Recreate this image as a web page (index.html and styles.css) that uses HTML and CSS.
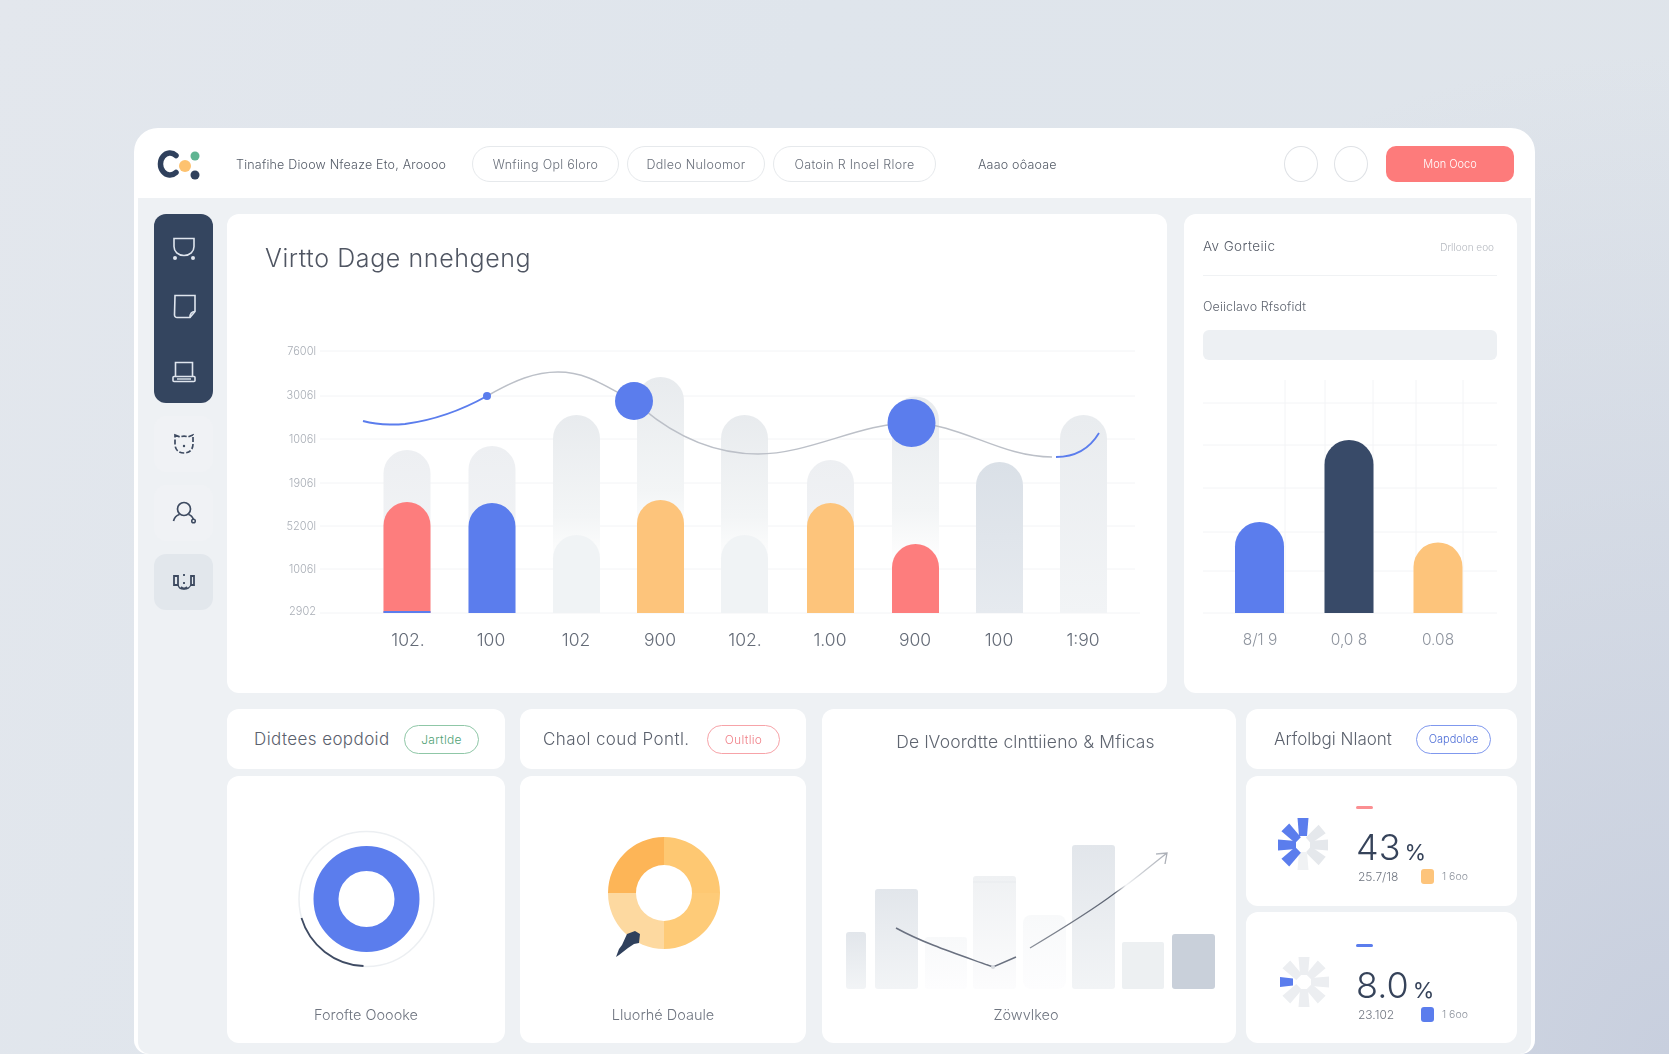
FILE: index.html
```html
<!DOCTYPE html>
<html lang="en">
<head>
<meta charset="utf-8">
<title>Dashboard</title>
<link rel="stylesheet" href="styles.css">
</head>
<body>
<div class="window">
  <header class="topbar">
    <svg class="logo" viewBox="156 148 44 34" width="44" height="34">
      <path d="M176 156.500a9.500 11 0 1 0 0 17" fill="none" stroke="#2f405c" stroke-width="5.500" stroke-linecap="round"/>
      <circle cx="185" cy="167" r="6" fill="#fdc26f"/>
      <circle cx="195" cy="157" r="4.500" fill="#5fb592"/>
      <circle cx="195" cy="176" r="4.500" fill="#2f405c"/>
    </svg>
    <span class="crumb">Tinafihe Dioow Nfeaze Eto, Aroooo</span>
    <nav class="pills">
      <span class="pill pill-a">Wnfiing Opl 6loro</span>
      <span class="pill pill-b">Ddleo Nuloomor</span>
      <span class="pill pill-c">Oatoin R Inoel Rlore</span>
    </nav>
    <span class="crumb2">Aaao oôaoae</span>
    <span class="spacer"></span>
    <span class="round"></span>
    <span class="round"></span>
    <span class="cta">Mon Ooco</span>
  </header>

  <div class="body">
    <aside class="side">
      <div class="side-dark">
        <svg class="ico" viewBox="0 0 26 26" width="26" height="26"><path d="M3 2.500h20v8c0 5-4 9-10 9s-10-4-10-9z" fill="none" stroke="#dfe5ee" stroke-width="1.600"/><circle cx="4" cy="22" r="2" fill="#dfe5ee"/><circle cx="22" cy="22" r="2" fill="#dfe5ee"/></svg>
        <svg class="ico" viewBox="0 0 26 26" width="26" height="26"><path d="M4 1.500h20v16l-5 6H6a2.500 2.500 0 0 1-2.500-2.500z" fill="none" stroke="#dfe5ee" stroke-width="1.600"/><path d="M24 17.500c-3 0-5 1-5 6" fill="none" stroke="#dfe5ee" stroke-width="1.600"/></svg>
        <svg class="ico ico-low" viewBox="0 0 26 26" width="26" height="26"><path d="M4.500 17V3.500h17V17" fill="none" stroke="#dfe5ee" stroke-width="1.600"/><rect x="2" y="17.500" width="22" height="5" rx="1" fill="none" stroke="#dfe5ee" stroke-width="1.600"/><path d="M6 20h14" stroke="#dfe5ee" stroke-width="1.400"/></svg>
      </div>
      <div class="side-btn">
        <svg class="ico" viewBox="0 0 26 26" width="26" height="26"><path d="M4 4l5 2c2-1 6-1 8 0l5-2v9c0 6-4 9-9 9s-9-3-9-9z" fill="none" stroke="#3d4a60" stroke-width="1.700" stroke-dasharray="5 2"/><circle cx="13" cy="15" r="1.200" fill="#3d4a60"/></svg>
      </div>
      <div class="side-btn">
        <svg class="ico" viewBox="0 0 26 26" width="26" height="26"><circle cx="13" cy="9" r="6.500" fill="none" stroke="#3d4a60" stroke-width="1.700"/><path d="M2.500 21c1-4 4-6 6-6.500M17.500 14.500c2 .5 4 2.500 5 5" fill="none" stroke="#3d4a60" stroke-width="1.700"/><circle cx="22.500" cy="21" r="1.800" fill="none" stroke="#3d4a60" stroke-width="1.500"/></svg>
      </div>
      <div class="side-btn side-btn-alt">
        <svg class="ico" viewBox="0 0 26 26" width="26" height="26"><path d="M3 7h4v9H3zM23 7h-3v9h3zM10 18c2 2 4 2 6 0M13 5v2M13 13v2" fill="none" stroke="#3d4a60" stroke-width="1.800"/><path d="M7 16c1 3 2 4 6 4s5-1 7-4" fill="none" stroke="#3d4a60" stroke-width="1.300"/></svg>
      </div>
    </aside>

    <main class="content">
      <div class="top-row">
        <section class="card main-card">
          <h1 class="main-title">Virtto Dage nnehgeng</h1>
          <svg class="chart" viewBox="227 340 940 340" width="940" height="340">
            <defs>
              <linearGradient id="fade" x1="0" y1="0" x2="0" y2="1"><stop offset="0" stop-color="#e8ebee"/><stop offset=".7" stop-color="#f3f5f6"/><stop offset="1" stop-color="#fefefe"/></linearGradient>
              <linearGradient id="fade2" x1="0" y1="0" x2="0" y2="1"><stop offset="0" stop-color="#edeff2"/><stop offset="1" stop-color="#f5f6f8"/></linearGradient>
              <linearGradient id="slate" x1="0" y1="0" x2="0" y2="1"><stop offset="0" stop-color="#dae0e7"/><stop offset="1" stop-color="#e6eaef"/></linearGradient>
              <linearGradient id="pale" x1="0" y1="0" x2="0" y2="1"><stop offset="0" stop-color="#e9ecef"/><stop offset="1" stop-color="#f2f4f6"/></linearGradient>
            </defs>
            <g class="grid">
              <path d="M320 351H1135M320 396H1135M320 439H1135M320 483H1135M320 526H1135M320 569H1135M320 613H1140"/>
            </g>
            <g class="axis-y">
              <text x="316" y="355">7600l</text>
              <text x="316" y="399">3006l</text>
              <text x="316" y="443">1006l</text>
              <text x="316" y="487">1906l</text>
              <text x="316" y="530">5200l</text>
              <text x="316" y="573">1006l</text>
              <text x="316" y="615">2902</text>
            </g>
            <path d="M383.500 613V473.500a23.500 23.500 0 0 1 47 0V613Z" fill="url(#fade2)"/>
            <path d="M468.500 613V469.500a23.500 23.500 0 0 1 47 0V613Z" fill="url(#fade2)"/>
            <path d="M553 560V438.500a23.500 23.500 0 0 1 47 0V560Z" fill="url(#fade)"/>
            <path d="M637 540V400.500a23.500 23.500 0 0 1 47 0V540Z" fill="url(#fade)"/>
            <path d="M721 560V438.500a23.500 23.500 0 0 1 47 0V560Z" fill="url(#fade)"/>
            <path d="M807 613V483.500a23.500 23.500 0 0 1 47 0V613Z" fill="url(#fade2)"/>
            <path d="M892 560V420a23.500 23.500 0 0 1 47 0V560Z" fill="url(#fade)"/>
            <path d="M976 613V485.500a23.500 23.500 0 0 1 47 0V613Z" fill="url(#slate)"/>
            <path d="M1060 613V438.500a23.500 23.500 0 0 1 47 0V613Z" fill="url(#pale)"/>
            <path d="M553 613V558.500a23.500 23.500 0 0 1 47 0V613Z" fill="#f0f3f5"/>
            <path d="M721 613V558.500a23.500 23.500 0 0 1 47 0V613Z" fill="#f0f3f5"/>
            <path d="M383.500 613V525.500a23.500 23.500 0 0 1 47 0V613Z" fill="#fd7d7d"/>
            <path d="M383.500 611h47v2h-47z" fill="#5b7ded"/>
            <path d="M468.500 613V526.500a23.500 23.500 0 0 1 47 0V613Z" fill="#5b7ded"/>
            <path d="M637 613V523.500a23.500 23.500 0 0 1 47 0V613Z" fill="#fdc47b"/>
            <path d="M807 613V526.500a23.500 23.500 0 0 1 47 0V613Z" fill="#fdc47b"/>
            <path d="M892 613V567.500a23.500 23.500 0 0 1 47 0V613Z" fill="#fd7d7d"/>
            <path d="M487 396C515 380 535 372 558 372C590 372 610 390 634 401C668 432 710 454 758 454C810 454 860 423 911 423C960 423 1000 457 1052 457" fill="none" stroke="#bcc0c8" stroke-width="1.500"/>
            <path d="M363 421C378 425 392 425 405 424C435 420 462 410 487 396" fill="none" stroke="#5b7ded" stroke-width="2"/>
            <path d="M1056 457C1075 457 1090 448 1099 433" fill="none" stroke="#5b7ded" stroke-width="1.800"/>
            <circle cx="487" cy="396" r="4" fill="#5b7ded"/>
            <circle cx="634" cy="401" r="19" fill="#5b7ded"/>
            <circle cx="911.500" cy="423" r="24" fill="#5b7ded"/>
            <g class="axis-x">
              <text x="408" y="646">102.</text>
              <text x="491" y="646">100</text>
              <text x="576" y="646">102</text>
              <text x="660" y="646">900</text>
              <text x="745" y="646">102.</text>
              <text x="830" y="646">1.00</text>
              <text x="915" y="646">900</text>
              <text x="999" y="646">100</text>
              <text x="1083" y="646">1:90</text>
            </g>
          </svg>
        </section>

        <section class="card side-card">
          <div class="side-head">
            <span class="side-title">Av Gorteiic</span>
            <span class="side-meta">Drlloon eoo</span>
          </div>
          <div class="side-label">Oeiiclavo Rfsofidt</div>
          <div class="side-field"></div>
          <svg class="chart" viewBox="1184 370 333 290" width="333" height="290">
            <g class="grid">
              <path d="M1203 403H1497M1203 445H1497M1203 488H1497M1203 532H1497M1203 571H1497M1203 613H1497M1285 380V613M1325 380V613M1373 380V613M1416 380V613M1463 380V613"/>
            </g>
            <path d="M1235 613V546.500a24.500 24.500 0 0 1 49 0V613Z" fill="#5b7ded"/>
            <path d="M1324.500 613V464.500a24.500 24.500 0 0 1 49 0V613Z" fill="#384a68"/>
            <path d="M1413.500 613V567a24.500 24.500 0 0 1 49 0V613Z" fill="#fdc47b"/>
            <g class="axis-x2">
              <text x="1260" y="645">8/1 9</text>
              <text x="1349" y="645">0,0 8</text>
              <text x="1438" y="645">0.08</text>
            </g>
          </svg>
        </section>
      </div>

      <div class="bottom-row">
        <div class="pair">
          <div class="column col-a">
            <div class="card head-card">
              <span class="head-title">Didtees eopdoid</span>
              <span class="tag tag-green">Jartlde</span>
            </div>
            <div class="card panel">
              <svg class="panel-art" viewBox="0 -8 278 205" width="278" height="205">
                <circle cx="139.500" cy="115" r="67.500" fill="none" stroke="#eceff2" stroke-width="1.500"/>
                <circle cx="139.500" cy="115" r="40.500" fill="none" stroke="#5b7ded" stroke-width="25"/>
                <path d="M74.500 134A67.500 67.500 0 0 0 136.500 182" fill="none" stroke="#3f4b63" stroke-width="1.800"/>
              </svg>
              <div class="panel-label">Forofte Ooooke</div>
            </div>
          </div>
          <div class="column col-b">
            <div class="card head-card head-card-b">
              <span class="head-title">Chaol coud Pontl.</span>
              <span class="tag tag-red">Oultlio</span>
            </div>
            <div class="card panel">
              <svg class="panel-art" viewBox="0 -8 286 205" width="286" height="205">
                <path d="M144 53a56 56 0 0 0-56 56h28a28 28 0 0 1 28-28z" fill="#fdb557"/>
                <path d="M144 53a56 56 0 0 1 56 56h-28a28 28 0 0 0-28-28z" fill="#fec872"/>
                <path d="M200 109a56 56 0 0 1-56 56v-28a28 28 0 0 0 28-28z" fill="#fecb78"/>
                <path d="M144 165a56 56 0 0 1-56-56h28a28 28 0 0 0 28 28z" fill="#fdd9a0"/>
                <path d="M107 150l8-3 5 3 -1 9-5 1-6 4-9 7 -3 2 3-8 3-4z" fill="#2f405c"/>
              </svg>
              <div class="panel-label">Lluorhé Doaule</div>
            </div>
          </div>
        </div>
        <div class="pair pair-tight">
          <div class="card trend-card">
            <div class="trend-title">De lVoordtte clnttiieno &amp; Mficas</div>
            <svg class="trend-art" viewBox="822 770 414 225" width="414" height="225">
              <defs>
                <linearGradient id="g1" x1="0" y1="0" x2="0" y2="1"><stop offset="0" stop-color="#e2e6eb"/><stop offset="1" stop-color="#f2f4f6"/></linearGradient>
                <linearGradient id="g2" x1="0" y1="0" x2="0" y2="1"><stop offset="0" stop-color="#eff1f3"/><stop offset="1" stop-color="#fcfcfd"/></linearGradient>
                <linearGradient id="g3" x1="0" y1="0" x2="0" y2="1"><stop offset="0" stop-color="#f8f9fa"/><stop offset="1" stop-color="#fdfdfe"/></linearGradient>
                <linearGradient id="fadeline" gradientUnits="userSpaceOnUse" x1="1030" y1="0" x2="1167" y2="0"><stop offset="0" stop-color="#8a8f99"/><stop offset=".62" stop-color="#59606f"/><stop offset=".7" stop-color="#f1f2f4"/><stop offset=".8" stop-color="#d0d3d8"/><stop offset="1" stop-color="#a9adb5"/></linearGradient>
              </defs>
              <rect x="846" y="932" width="20" height="57" rx="3" fill="url(#g1)"/>
              <rect x="875" y="889" width="43" height="100" rx="3" fill="url(#g1)"/>
              <rect x="925" y="937" width="42" height="52" rx="3" fill="url(#g3)"/>
              <rect x="973" y="876" width="43" height="113" rx="3" fill="url(#g2)"/>
              <path d="M973 882h43" stroke="#e8ebee" stroke-width="1"/>
              <rect x="1023" y="915" width="43" height="74" rx="8" fill="url(#g3)"/>
              <rect x="1072" y="845" width="43" height="144" rx="3" fill="url(#g1)"/>
              <rect x="1122" y="942" width="42" height="47" rx="2" fill="#edf0f2"/>
              <rect x="1172" y="934" width="43" height="55" rx="3" fill="#c9d0da"/>
              <path d="M896 928C925 944 960 955 993 967L1016 957" fill="none" stroke="#6a7180" stroke-width="1.500"/>
              <path d="M1030 948C1060 930 1090 912 1115 893C1135 880 1150 866 1167 853M1156 854L1167 853L1165 864" fill="none" stroke="url(#fadeline)" stroke-width="1.300"/>
              <circle cx="993" cy="967" r="2" fill="#d6d9de"/>
            </svg>
            <div class="panel-label panel-label-c">Zöwvlkeo</div>
          </div>
          <div class="column col-d">
            <div class="card head-card head-card-d">
              <span class="head-title">Arfolbgi Nlaont</span>
              <span class="tag tag-blue">Oapdoloe</span>
            </div>
            <div class="card stat stat-a">
              <svg class="spin" viewBox="-28 -28 56 56" width="56" height="56">
                <defs><path id="spoke" d="M-4-7L-5.500-25H5.500L4-7Z"/></defs>
                <g fill="#e5e8ec"><use href="#spoke" transform="rotate(50)"/><use href="#spoke" transform="rotate(90)"/><use href="#spoke" transform="rotate(130)"/><use href="#spoke" transform="rotate(180)" fill="#f0f2f4"/></g>
                <g fill="#5b7ded"><use href="#spoke" transform="translate(0 -2)"/><use href="#spoke" transform="rotate(-45)"/><use href="#spoke" transform="rotate(-90)"/><use href="#spoke" transform="rotate(-135)"/></g>
              </svg>
              <div class="stat-col">
                <span class="dash dash-red"></span>
                <div class="stat-value">43<span class="stat-pct">%</span></div>
                <div class="stat-foot"><span class="stat-small">25.7/18</span><span class="sq sq-orange"></span><span class="stat-tiny">1 6oo</span></div>
              </div>
            </div>
            <div class="card stat stat-b">
              <svg class="spin spin-b" viewBox="-28 -28 56 56" width="56" height="56">
                <g fill="#eceef1"><use href="#spoke"/><use href="#spoke" transform="rotate(45)"/><use href="#spoke" transform="rotate(90)"/><use href="#spoke" transform="rotate(135)"/><use href="#spoke" transform="rotate(180)"/><use href="#spoke" transform="rotate(225)"/><use href="#spoke" transform="rotate(315)"/></g>
                <path d="M-24-5l13 1.500v7l-13 1.500z" fill="#5b7ded"/>
              </svg>
              <div class="stat-col">
                <span class="dash dash-blue"></span>
                <div class="stat-value">8.0<span class="stat-pct">%</span></div>
                <div class="stat-foot"><span class="stat-small">23.102</span><span class="sq sq-blue"></span><span class="stat-tiny">1 6oo</span></div>
              </div>
            </div>
          </div>
        </div>
      </div>
    </main>
  </div>
</div>
</body>
</html>
```
FILE: styles.css
```css
* { box-sizing: border-box; }
html, body { height: 100%; }
body {
  margin: 0;
  height: 1054px;
  overflow: hidden;
  padding: 128px 134px 0;
  font-family: "Inter", "Liberation Sans", sans-serif;
  background:
    radial-gradient(ellipse 900px 1000px at 100% 100%, #c8cfde 0%, rgba(200, 207, 222, 0) 100%),
    linear-gradient(110deg, #e3e7ed 0%, #dfe5ec 40%, #dfe4ea 100%);
}
.window {
  width: 1401px;
  height: 926px;
  background: #fff;
  border-radius: 24px 24px 14px 14px;
  padding: 0 4px;
  filter: blur(0.35px);
}
.topbar {
  height: 70px;
  display: flex;
  align-items: center;
  padding: 2px 17px 0 18px;
}
.logo { flex: none; }
.crumb { font-size: 12.500px; letter-spacing: .2px; font-weight: 300; color: #555c68; margin-left: 36px; width: 236px; white-space: nowrap; }
.pills { display: flex; gap: 8px; }
.pill {
  height: 36px;
  border: 1px solid #e6e9ec;
  border-radius: 18px;
  display: flex;
  align-items: center;
  justify-content: center;
  font-size: 12.500px;
  letter-spacing: .3px;
  font-weight: 300;
  color: #6a707b;
  white-space: nowrap;
}
.pill-a { width: 147px; }
.pill-b { width: 138px; }
.pill-c { width: 163px; }
.crumb2 { font-size: 12.500px; letter-spacing: .2px; font-weight: 300; color: #555c68; margin-left: 42px; white-space: nowrap; }
.spacer { flex: 1; }
.round {
  width: 34px;
  height: 36px;
  border: 1px solid #dfe2e6;
  border-radius: 50%;
  margin-right: 16px;
}
.round + .cta { margin-left: 2px; }
.cta {
  width: 128px;
  height: 36px;
  background: #fd7b7b;
  border-radius: 10px;
  color: #fff;
  font-size: 11px;
  font-weight: 300;
  display: flex;
  align-items: center;
  justify-content: center;
}
.body {
  display: flex;
  height: 856px;
  background: #eef1f4;
  border-radius: 0 0 12px 12px;
  padding: 16px 14px 0 16px;
}
.side { width: 59px; flex: none; display: flex; flex-direction: column; gap: 13px; margin-right: 14px; }
.side-dark {
  height: 189px;
  background: #34455f;
  border-radius: 12px;
  display: flex;
  flex-direction: column;
  align-items: center;
  padding-top: 22px;
  gap: 32px;
}
.ico { flex: none; display: block; }
.ico-low { margin-top: 7px; }
.side-btn {
  height: 56px;
  background: #f0f2f5;
  border-radius: 12px;
  display: flex;
  align-items: center;
  justify-content: center;
}
.side-btn-alt { background: #e2e7ec; }
.content { width: 1290px; display: flex; flex-direction: column; gap: 16px; }
.top-row { display: flex; gap: 17px; height: 479px; }
.card { background: #fff; border-radius: 12px; }
.main-card { width: 940px; height: 479px; }
.main-title {
  margin: 0;
  height: 126px;
  padding: 28px 0 0 38px;
  font-size: 25px;
  letter-spacing: .6px;
  line-height: 32px;
  font-weight: 300;
  color: #4f5562;
}
.chart { display: block; }
.grid path { fill: none; stroke: #f3f4f6; stroke-width: 1; }
.axis-y text { font-size: 11px; fill: #a9aeb6; text-anchor: end; font-weight: 300; }
.axis-x text { font-size: 17.500px; fill: #646b77; text-anchor: middle; font-weight: 300; }
.axis-x2 text { font-size: 15.500px; fill: #8e949e; text-anchor: middle; font-weight: 300; }
.side-card { width: 333px; height: 479px; padding: 0; }
.side-head {
  margin: 0 20px 0 19px;
  height: 62px;
  border-bottom: 1px solid #f0f2f4;
  display: flex;
  justify-content: space-between;
  align-items: flex-start;
  padding-top: 23px;
}
.side-title { font-size: 13.500px; letter-spacing: .4px; line-height: 18px; color: #565c68; font-weight: 300; }
.side-meta { font-size: 10px; line-height: 18px; padding-top: 1px; color: #b4b8bf; padding-right: 3px; font-weight: 300; }
.side-label { margin: 22px 0 0 19px; font-size: 12.500px; letter-spacing: .1px; line-height: 18px; color: #5f6570; font-weight: 300; }
.side-field { margin: 14px 20px 10px 19px; height: 30px; background: #edf0f3; border-radius: 6px; }
.bottom-row { display: flex; gap: 16px; height: 334px; }
.pair { display: flex; gap: 15px; }
.pair-tight { gap: 10px; }
.column { display: flex; flex-direction: column; gap: 7px; }
.col-a { width: 278px; }
.col-b { width: 286px; }
.col-d { width: 271px; }
.head-card {
  height: 60px;
  display: flex;
  align-items: center;
  padding-left: 27px;
  flex: none;
}
.head-card-b { padding-left: 23px; }
.head-card-d { padding-left: 28px; }
.head-title { font-size: 17px; letter-spacing: .4px; font-weight: 300; color: #5b616d; white-space: nowrap; width: 150px; }
.head-card-b .head-title { width: 164px; }
.head-card-d .head-title { width: 142px; letter-spacing: 0; }
.tag {
  height: 29px;
  border: 1.500px solid;
  border-radius: 15px;
  display: flex;
  align-items: center;
  justify-content: center;
  font-size: 12px;
  letter-spacing: .3px;
  font-weight: 300;
}
.tag-green { width: 75px; border-color: #8fc7a7; color: #4f9f74; }
.tag-red { width: 73px; border-color: #f7a3a8; color: #f08088; }
.tag-blue { width: 75px; font-size: 11px; letter-spacing: 0; border-color: #7f98ee; color: #5070d8; }
.panel { height: 267px; display: flex; flex-direction: column; flex: none; }
.panel-art { display: block; flex: none; }
.panel-label { text-align: center; font-size: 14.500px; line-height: 20px; font-weight: 300; color: #6f7580; margin-top: 24px; }
.trend-card { width: 414px; height: 334px; }
.trend-title { padding: 22px 7px 0 0; height: 61px; line-height: 22px; text-align: center; font-size: 17.500px; letter-spacing: .15px; font-weight: 300; color: #5f6570; }
.trend-art { display: block; }
.panel-label-c { margin-top: 10px; padding-right: 6px; }
.stat { display: flex; padding-left: 28px; flex: none; }
.stat-a { height: 130px; }
.stat-b { height: 131px; margin-top: -1px; }
.spin { flex: none; margin: 41px 0 0 1px; overflow: visible; }
.spin-b { margin: 42px -2px 0 2px; }
.stat-col { margin-left: 25px; display: flex; flex-direction: column; }
.stat-b .stat-col { margin-left: 26px; }
.dash { width: 17px; height: 3px; border-radius: 2px; margin-top: 30px; }
.dash-red { background: #fb8f92; }
.dash-blue { background: #5b7ded; margin-top: 32px; }
.stat-value { margin-top: 18px; font-size: 36px; line-height: 40px; font-weight: 300; color: #36435a; white-space: nowrap; }
.stat-pct { font-size: 22px; margin-left: 4px; font-weight: 400; }
.stat-foot { display: flex; align-items: center; margin-top: -4px; height: 16px; padding-left: 2px; }
.stat-small { font-size: 12px; font-weight: 300; color: #6f7580; width: 63px; white-space: nowrap; }
.sq { width: 13px; height: 15px; border-radius: 3px; margin-right: 8px; flex: none; }
.sq-orange { background: #fdc47b; }
.sq-blue { background: #5b7ded; }
.stat-tiny { font-size: 10.500px; font-weight: 300; color: #8e949e; white-space: nowrap; }
```
